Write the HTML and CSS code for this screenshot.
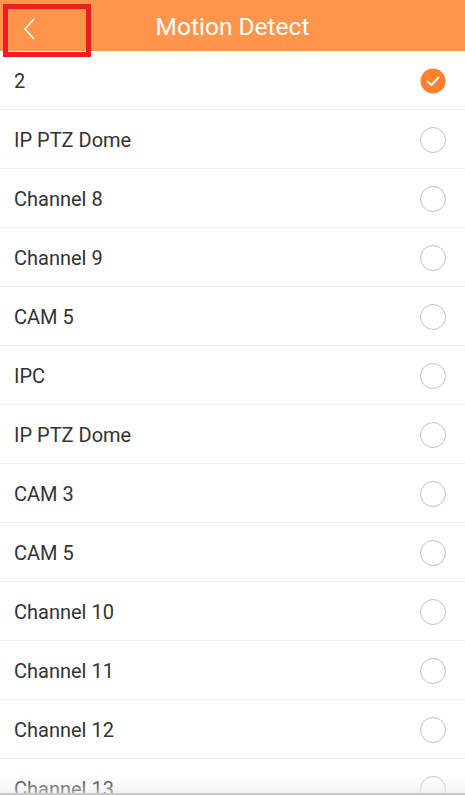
FILE: index.html
```html
<!DOCTYPE html>
<html>
<head>
<meta charset="utf-8">
<link rel="stylesheet" href="styles.css">
</head>
<body>
<div class="screen">
  <header class="bar">
    <div class="back-box">
      <svg class="back" width="14" height="22" viewBox="0 0 14 22"><path d="M11 1 L2 11 L11 21" fill="none" stroke="#fff" stroke-width="1.6"/></svg>
    </div>
    <h1 class="title">Motion Detect</h1>
  </header>
  <ul class="list">
    <li class="row"><span class="label">2</span><span class="check on"><svg width="26" height="26" viewBox="0 0 26 26"><circle cx="13" cy="13" r="12.5" fill="#ff7f2c"/><path d="M7.5 13.5 L11.5 17 L18.5 9.5" fill="none" stroke="#fff" stroke-width="2" stroke-linecap="round" stroke-linejoin="round"/></svg></span></li>
    <li class="row"><span class="label">IP PTZ Dome</span><span class="check"></span></li>
    <li class="row"><span class="label">Channel 8</span><span class="check"></span></li>
    <li class="row"><span class="label">Channel 9</span><span class="check"></span></li>
    <li class="row"><span class="label">CAM 5</span><span class="check"></span></li>
    <li class="row"><span class="label">IPC</span><span class="check"></span></li>
    <li class="row"><span class="label">IP PTZ Dome</span><span class="check"></span></li>
    <li class="row"><span class="label">CAM 3</span><span class="check"></span></li>
    <li class="row"><span class="label">CAM 5</span><span class="check"></span></li>
    <li class="row"><span class="label">Channel 10</span><span class="check"></span></li>
    <li class="row"><span class="label">Channel 11</span><span class="check"></span></li>
    <li class="row"><span class="label">Channel 12</span><span class="check"></span></li>
    <li class="row"><span class="label">Channel 13</span><span class="check"></span></li>
  </ul>
  <div class="bottom-fade"></div>
</div>
</body>
</html>
```
FILE: styles.css
```css
* { box-sizing: border-box; }
html, body { margin: 0; padding: 0; background: #fff; }
body { font-family: Roboto, "Noto Sans", sans-serif; overflow: hidden; }
.screen { position: relative; width: 465px; height: 795px; overflow: hidden; }
.bar {
  height: 51px;
  background: #fe954c;
  display: flex;
  align-items: center;
  justify-content: center;
  position: relative;
}
.title {
  margin: 0;
  font-weight: 400;
  font-size: 24.5px;
  color: #fff;
  padding-top: 1px;
}
.back-box {
  position: absolute;
  left: 3px;
  top: 4px;
  width: 88px;
  height: 53px;
  border: 5px solid #ee1c25;
  z-index: 2;
}
.back { position: absolute; left: 15px; top: 9px; }
.list { list-style: none; margin: 0; padding: 0; }
.row {
  height: 59px;
  border-bottom: 1px solid #efefef;
  display: flex;
  align-items: center;
  justify-content: space-between;
  padding: 2px 19px 0 14px;
}
.label { font-size: 20px; color: #333; }
.check {
  width: 26px;
  height: 26px;
  border-radius: 50%;
  border: 1.5px solid #c2c2c2;
  display: block;
}
.check.on { border: none; }
.check svg { display: block; }
.bottom-fade {
  position: absolute;
  left: 0; right: 0; bottom: 0;
  height: 20px;
  background: linear-gradient(to bottom, rgba(255,255,255,0), rgba(235,235,235,0.6));
  border-bottom: 2px solid #c8c8c8;
}
```
